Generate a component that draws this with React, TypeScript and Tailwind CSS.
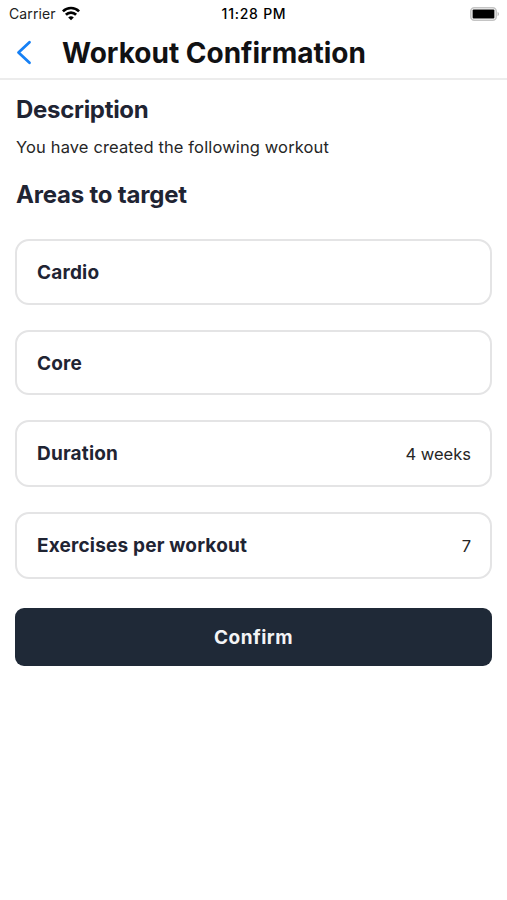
import React from "react";

type Row = {
  label: string;
  value?: string;
  className: string;
};

const ROWS: Row[] = [
  { label: "Cardio", className: "mt-[28px] h-[66px] pt-[2px]" },
  { label: "Core", className: "mt-[25px] h-[65px] pt-[2px]" },
  { label: "Duration", value: "4 weeks", className: "mt-[25px] h-[67px]" },
  { label: "Exercises per workout", value: "7", className: "mt-[25px] h-[67px]" },
];

const StatusBar = () => (
  <div className="flex h-[27px] items-center justify-between pl-[9px] pr-[7px] text-[14px] text-black">
    <div className="flex w-[90px] items-center gap-[6px]">
      <span className="tracking-[0.1px] text-[#222]">Carrier</span>
      <svg width="18" height="15" viewBox="0 0 18 15" fill="none" stroke="black" strokeWidth="2.7">
        <path d="M0.9 5.4a11.4 11.4 0 0 1 16.2 0" />
        <path d="M3.9 8.7a7.2 7.2 0 0 1 10.2 0" />
        <path d="M9 14.3 6.2 11.5a4 4 0 0 1 5.6 0z" fill="black" stroke="none" />
      </svg>
    </div>
    <span className="-ml-px font-medium tracking-[0.75px]">11:28 PM</span>
    <div className="flex w-[90px] justify-end">
      <svg width="30" height="14" viewBox="0 0 30 14">
        <rect x="0.8" y="0.8" width="25.4" height="12.4" rx="3.5" fill="none" stroke="#c4c4c4" strokeWidth="1.6" />
        <rect x="2.6" y="2.6" width="21.8" height="8.8" rx="1" fill="black" />
        <path d="M27.6 4.7a2.6 2.6 0 0 1 0 4.6z" fill="#b5b5b5" />
      </svg>
    </div>
  </div>
);

const Header = () => (
  <header className="flex h-[53px] items-center border-b-2 border-[#ececec] pl-[16px]">
    <button aria-label="Back" className="w-[46px]">
      <svg
        width="16"
        height="26"
        viewBox="0 0 16 26"
        fill="none"
        stroke="#1680f5"
        strokeWidth="2.8"
        strokeLinecap="round"
        strokeLinejoin="round"
      >
        <path d="M13.5 2.2 2.5 12.5l11 10.3" />
      </svg>
    </button>
    <h1 className="text-[28px] font-bold leading-none text-[#111113]">Workout Confirmation</h1>
  </header>
);

const App = () => {
  return (
    <div className="h-[900px] w-[507px] overflow-hidden bg-white font-['Inter',sans-serif] text-[#1f2433]">
      <StatusBar />
      <Header />
      <main className="px-[15px]">
        <h2 className="mt-[14px] pl-px text-[24px] font-bold leading-[32px] tracking-[-0.3px]">Description</h2>
        <p className="mt-[9px] pl-px text-[16.5px] leading-[24px] tracking-[0.13px] text-[#262626]">
          You have created the following workout
        </p>
        <h2 className="mt-[20px] pl-px text-[24px] font-bold leading-[32px] tracking-[-0.2px]">Areas to target</h2>
        {ROWS.map((row) => (
          <div
            key={row.label}
            className={`flex items-center justify-between rounded-[14px] border-2 border-[#e4e4e5] pl-[20px] pr-[19px] ${row.className}`}
          >
            <span className="text-[19px] font-bold leading-[24px] tracking-[0.18px]">{row.label}</span>
            {row.value && <span className="text-[16.5px] leading-[24px] text-[#262626]">{row.value}</span>}
          </div>
        ))}
        <button className="mt-[29px] h-[58px] w-full rounded-[9px] bg-[#1f2937] pt-[2px] text-[19px] font-bold tracking-[0.5px] text-[#f3f4f6]">
          Confirm
        </button>
      </main>
    </div>
  );
};

export default App;
